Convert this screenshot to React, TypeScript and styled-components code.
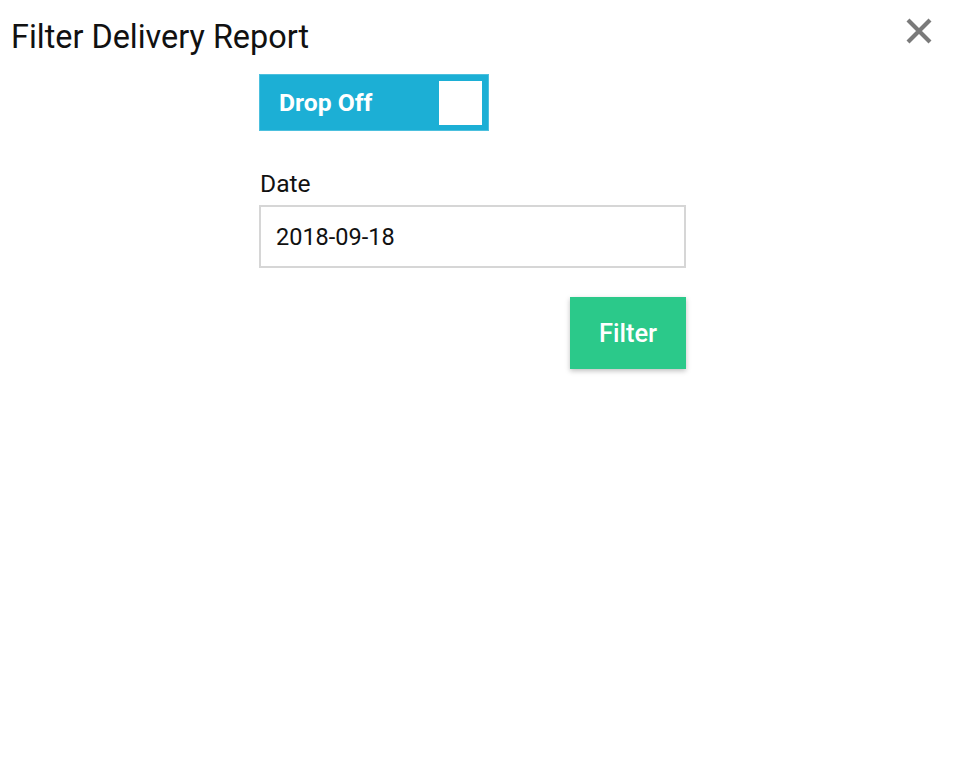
import React from "react";
import styled, { createGlobalStyle } from "styled-components";

const Global = createGlobalStyle`
  html, body { margin: 0; padding: 0; background: #fff; }
  body { font-family: Roboto, "Noto Sans", sans-serif; color: #111; }
`;

const Page = styled.div`
  width: 964px;
  height: 764px;
  position: relative;
  box-sizing: border-box;
  padding: 17px 0 0 11px;
`;

const Title = styled.h1`
  margin: 0;
  font-size: 32.4px;
  font-weight: 400;
  line-height: 40px;
  color: #111;
`;

const Close = styled.button`
  position: absolute;
  top: 17px;
  right: 31px;
  width: 28px;
  height: 28px;
  border: 0;
  padding: 0;
  background: none;
  cursor: pointer;
  display: flex;
  align-items: center;
  justify-content: center;
`;

const Form = styled.div`
  margin-left: 248px;
  margin-top: 17px;
  width: 427px;
  display: flex;
  flex-direction: column;
`;

const Toggle = styled.div`
  width: 230px;
  height: 57px;
  box-sizing: border-box;
  background: #1cafd5;
  border: 1px solid #4cc0de;
  display: flex;
  align-items: center;
  justify-content: space-between;
  padding: 0 6px 0 19px;
`;

const ToggleLabel = styled.span`
  color: #fff;
  font-weight: 700;
  font-size: 24.7px;
`;

const ToggleKnob = styled.span`
  width: 43px;
  height: 44px;
  background: #fff;
`;

const Label = styled.label`
  margin-top: 39px;
  font-size: 24.6px;
  line-height: 28px;
  padding-left: 1px;
  color: #111;
`;

const Input = styled.div`
  margin-top: 7px;
  height: 63px;
  box-sizing: border-box;
  border: 2px solid #d6d6d6;
  display: flex;
  align-items: center;
  padding-left: 15px;
  font-size: 23.5px;
  color: #111;
`;

const Actions = styled.div`
  display: flex;
  justify-content: flex-end;
  margin-top: 29px;
`;

const FilterButton = styled.button`
  width: 116px;
  height: 72px;
  border: 0;
  padding: 0;
  background: #2bc98a;
  color: #fff;
  font-family: Roboto, sans-serif;
  font-size: 25.5px;
  font-weight: 500;
  box-shadow: 0 2px 5px rgba(0, 0, 0, 0.25);
  cursor: pointer;
`;

export default function App() {
  return (
    <>
      <Global />
      <Page>
        <Title>Filter Delivery Report</Title>
        <Close aria-label="close">
          <svg width="28" height="28" viewBox="0 0 28 28">
            <path d="M3 3 L25 25 M25 3 L3 25" stroke="#7a7a7a" strokeWidth="4.2" strokeLinecap="butt" />
          </svg>
        </Close>
        <Form>
          <Toggle>
            <ToggleLabel>Drop Off</ToggleLabel>
            <ToggleKnob />
          </Toggle>
          <Label>Date</Label>
          <Input>2018-09-18</Input>
          <Actions>
            <FilterButton>Filter</FilterButton>
          </Actions>
        </Form>
      </Page>
    </>
  );
}
